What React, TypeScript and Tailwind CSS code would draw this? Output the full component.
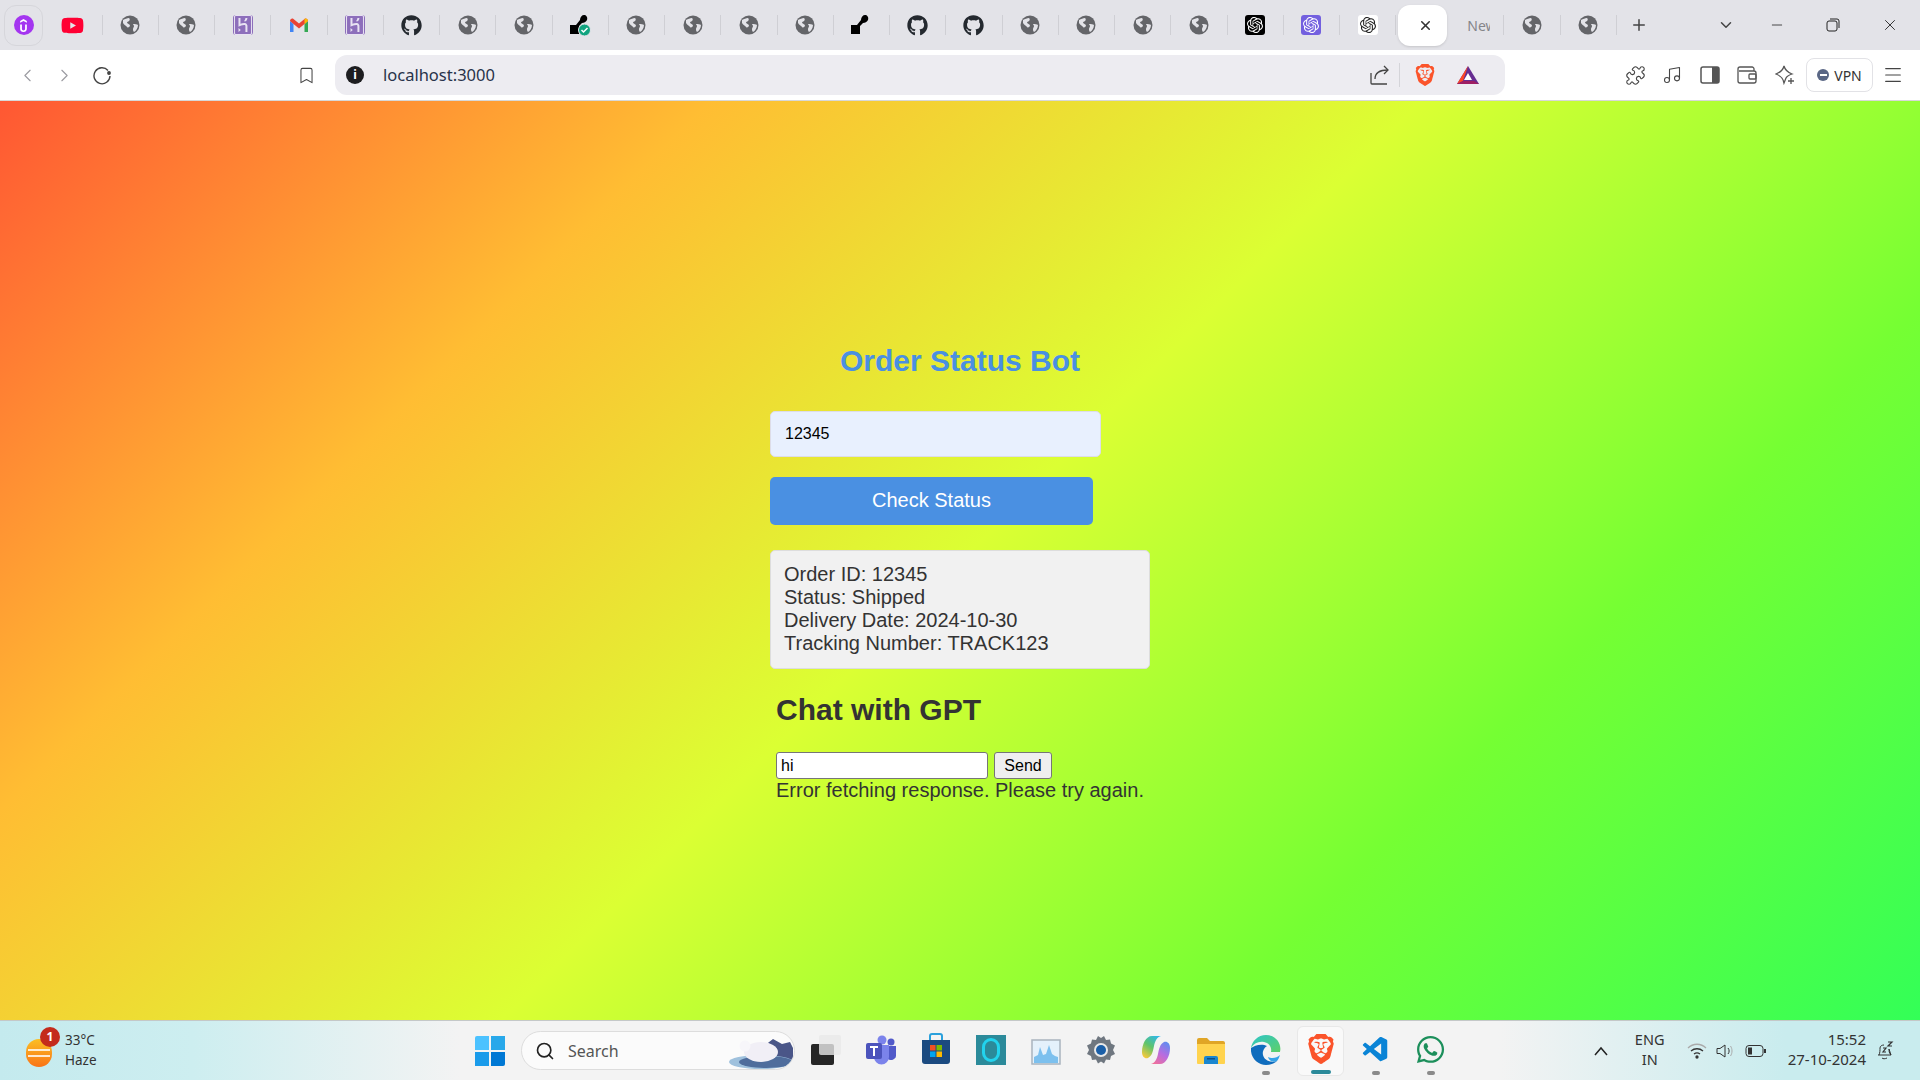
import { Bookmark, ChevronDown, ChevronLeft, ChevronRight, Menu, Minus, Music, Plus, Puzzle, Search, X } from "lucide-react";
import { FaGithub, FaWhatsapp, FaYoutube } from "react-icons/fa";
import { SiBrave, SiHeroku, SiOpenai, SiUdemy } from "react-icons/si";
import { VscVscode } from "react-icons/vsc";

function Globe() {
  return (
    <svg width="20" height="20" viewBox="0 0 20 20">
      <circle cx="10" cy="10" r="9.5" fill="#646569" />
      <path d="M3 5c2-1 4-2 6-2 1 1 1 2 0 3-1 .5-2 1-2 2 1 1 3 1 3 3-1 1.500-2 2-3 1-1-1.500-3-2-4-4zM13 9c2 0 4 0 5 1 0 3-2 6-4 7-1-1-1-2-1-3s1-2 1-3-1-1-1-2z" fill="#e3e3e8" />
    </svg>
  );
}

function Gmail() {
  return (
    <svg width="20" height="20" viewBox="0 0 20 20">
      <path d="M1 6v11h3.500V9z" fill="#4285f4" />
      <path d="M19 6v11h-3.500V9z" fill="#34a853" />
      <path d="M1 6c0-2 2-3 3.500-2L10 8.500 15.500 4c1.500-1 3.500 0 3.500 2l-3.500 3L10 13.500 4.500 9z" fill="#ea4335" />
      <path d="M15.500 4c1.500-1 3.500 0 3.500 2l-3.500 3z" fill="#fbbc04" />
    </svg>
  );
}

function KeyShape({ check }: { check?: boolean }) {
  return (
    <svg width="22" height="22" viewBox="0 0 22 22">
      <path d="M1 11h6l4-5c0-3 2-5 4-5s4 2 3 5c-1 2-3 3-5 3l-3 3v8H1z" fill="#000" />
      {check && <circle cx="15.500" cy="16" r="6" fill="#10a37f" stroke="#e3e3e8" />}
      {check && <path d="M12.500 16l2 2 4-4" fill="none" stroke="#fff" strokeWidth="1.500" />}
    </svg>
  );
}

function OpenAiTile({ bg, color }: { bg: string; color: string }) {
  return (
    <div className="w-5 h-5 rounded-[3px] flex items-center justify-center" style={{ background: bg }}>
      <SiOpenai size={16} color={color} />
    </div>
  );
}

const tabs = [
  "globe", "globe", "heroku", "gmail", "heroku", "github", "globe", "globe", "lock", "globe", "globe", "globe", "globe",
  "key", "github", "github", "globe", "globe", "globe", "globe", "aiBlack", "aiPurple", "aiWhite",
];

function TabIcon({ kind }: { kind: string }) {
  if (kind === "heroku") {
    return (
      <div className="w-5 h-5 rounded-[3px] bg-[#8d6fbb] flex items-center justify-center">
        <SiHeroku size={20} color="#e8e2f2" />
      </div>
    );
  }
  if (kind === "gmail") return <Gmail />;
  if (kind === "github") return <FaGithub size={21} color="#24292f" />;
  if (kind === "lock") return <KeyShape check />;
  if (kind === "key") return <KeyShape />;
  if (kind === "aiBlack") return <OpenAiTile bg="#000" color="#fff" />;
  if (kind === "aiPurple") return <OpenAiTile bg="#7360df" color="#fff" />;
  if (kind === "aiWhite") return <OpenAiTile bg="#fff" color="#222" />;
  return <Globe />;
}

function Tab({ children }: { children: React.ReactNode }) {
  return (
    <div className="w-[56.25px] h-5 flex items-center justify-center border-r border-[#cfcfd4] shrink-0">{children}</div>
  );
}

function TabStrip() {
  return (
    <div className="h-[50px] bg-[#e3e3e8] flex items-center shrink-0 pl-1">
      <div className="w-[39px] h-[41px] rounded-xl border border-[#d6d6db] flex items-center justify-center">
        <div className="w-5 h-5 rounded-full bg-[#a435f0] flex items-center justify-center">
          <SiUdemy size={13} color="#fff" />
        </div>
      </div>
      <div className="w-[59.5px] h-5 flex items-center justify-center border-r border-[#cfcfd4] shrink-0">
        <FaYoutube size={23} color="#ff0033" />
      </div>
      {tabs.map((t, i) => (
        <Tab key={i}>
          <TabIcon kind={t} />
        </Tab>
      ))}
      <div className="w-[49px] h-[41px] ml-[2px] bg-white rounded-xl flex items-center justify-end pr-[14px] shadow-sm shrink-0">
        <X size={15} strokeWidth={2.5} color="#333" />
      </div>
      <div className="w-[57px] pl-5 h-5 flex items-center text-[14px] text-[#85858a] font-['Noto_Sans',sans-serif] border-r border-[#cfcfd4] shrink-0">
        <span className="w-[23px] overflow-hidden">New</span>
      </div>
      <Tab>
        <Globe />
      </Tab>
      <Tab>
        <Globe />
      </Tab>
      <Plus size={18} color="#444" className="ml-[13px]" />
      <ChevronDown size={18} color="#444" className="ml-[69px]" />
      <Minus size={16} strokeWidth={1.200} color="#222" className="ml-[34px]" />
      <svg width="14" height="14" viewBox="0 0 14 14" className="ml-[41px]" fill="none" stroke="#222">
        <rect x="1" y="3" width="10" height="10" rx="2" />
        <path d="M4 1h7a2 2 0 0 1 2 2v7" />
      </svg>
      <X size={18} strokeWidth={1.200} color="#222" className="ml-[41px]" />
    </div>
  );
}

function Toolbar() {
  return (
    <div className="h-[51px] bg-white border-b border-[#d8d8d8] flex items-center shrink-0 pl-[17px] text-[#555]">
      <ChevronLeft size={21} strokeWidth={1.300} color="#9a9aa0" />
      <ChevronRight size={21} strokeWidth={1.300} color="#9a9aa0" className="ml-[16px]" />
      <svg width="20" height="20" viewBox="0 0 20 20" fill="none" stroke="#444" strokeWidth="1.400" className="ml-[17px]">
        <path d="M16 5.500A8 8 0 1 0 18 11" />
        <circle cx="17" cy="8" r="1.200" fill="#444" />
      </svg>
      <Bookmark size={19} strokeWidth={1.300} color="#444" className="ml-[185px]" />
      <div className="w-[1170px] h-10 ml-[19px] rounded-xl bg-[#edecf1] flex items-center pl-[11px] pr-[25px]">
        <div className="w-[18px] h-[18px] rounded-full bg-[#1d1d20] text-white text-[12px] font-bold flex items-center justify-center font-['Noto_Sans',sans-serif]">
          i
        </div>
        <span className="ml-[19px] text-[16.500px] text-[#28334a] font-['Noto_Sans',sans-serif] leading-none">localhost:3000</span>
        <svg width="22" height="22" viewBox="0 0 22 22" fill="none" stroke="#444" strokeWidth="1.300" className="ml-auto">
          <path d="M2 9v10a1 1 0 0 0 1 1h15" />
          <path d="M6 15c0-6 5-9 13-9" />
          <path d="M15 2l4 4-4 4" />
        </svg>
        <div className="w-px h-6 bg-[#d4d4d9] ml-[8px]" />
        <SiBrave size={22} color="#fb542b" className="ml-[14px]" />
        <svg width="24" height="20" viewBox="0 0 24 20" className="ml-[20px]">
          <path d="M12 1 1 19h22z" fill="#662d91" />
          <path d="M12 1 1 19l6-3z" fill="#ff4724" />
          <path d="M1 19h22l-5-3H7z" fill="#9e1f63" />
          <path d="M12 8l-4 7h8z" fill="#fff" />
        </svg>
      </div>
      <Puzzle size={21} strokeWidth={1.300} color="#444" className="ml-[120px]" />
      <Music size={20} strokeWidth={1.300} color="#444" className="ml-[16px]" />
      <svg width="20" height="18" viewBox="0 0 20 18" className="ml-[18px]">
        <rect x="1" y="1" width="18" height="16" rx="2" fill="none" stroke="#555" strokeWidth="1.500" />
        <rect x="12" y="1" width="7" height="16" fill="#555" />
      </svg>
      <svg width="20" height="18" viewBox="0 0 20 18" fill="none" stroke="#555" strokeWidth="1.300" className="ml-[17px]">
        <path d="M17 5V3a2 2 0 0 0-2-2H3a2 2 0 0 0-2 2v12a2 2 0 0 0 2 2h14a2 2 0 0 0 2-2V7a2 2 0 0 0-2-2H2" />
        <rect x="12" y="8" width="7" height="5" rx="1" />
      </svg>
      <svg width="20" height="20" viewBox="0 0 20 20" fill="none" stroke="#555" strokeWidth="1.300" className="ml-[18px]">
        <path d="M9 1c1 4 3 6 8 8-3 1-5 2-6 4l-2 5c-1-5-3-7-8-9 5-2 7-4 8-8z" />
        <path d="M16 13v6M13 16h6" />
      </svg>
      <div className="w-[67px] h-[34px] ml-[11px] rounded-lg border border-[#e2e2e6] flex items-center justify-center gap-[5px] text-[14px] text-[#333] font-['Noto_Sans',sans-serif]">
        <span className="w-[12px] h-[12px] rounded-full bg-[#5a6785] flex items-center justify-center">
          <span className="w-[7px] h-[2px] bg-white" />
        </span>
        VPN
      </div>
      <Menu size={22} strokeWidth={1.200} color="#444" className="ml-[9px]" />
    </div>
  );
}

function OrderPage() {
  return (
    <main className="flex-1 min-h-0 overflow-hidden bg-[linear-gradient(135deg,#ff5733,#ffbd33,#dbff33,#75ff33,#33ff57)] font-['Liberation_Sans',Arial,sans-serif] text-[#333]">
      <div className="w-[380px] mx-auto pt-[240px]">
        <h1 className="text-[30px] leading-[40px] font-bold text-[#4a90e2] text-center">Order Status Bot</h1>
        <input
          readOnly
          value="12345"
          className="block w-[331px] h-[46px] mt-[30px] px-[14px] rounded-[5px] border border-[#dddde8] bg-[#e8f0fe] text-[16px] text-black outline-none"
        />
        <button className="block w-[323px] h-[48px] mt-[20px] pb-[2px] rounded-[5px] bg-[#4a90e2] text-white text-[20px]">
          Check Status
        </button>
        <div className="mt-[25px] h-[119px] rounded-[5px] border border-[#dddddd] bg-[#f1f1f1] px-[13px] pt-[12px] text-[20px] leading-[23px]">
          <p>Order ID: 12345</p>
          <p>Status: Shipped</p>
          <p>Delivery Date: 2024-10-30</p>
          <p>Tracking Number: TRACK123</p>
        </div>
        <div className="pl-[6px]">
          <h2 className="mt-[23px] text-[30px] leading-[36px] font-bold">Chat with GPT</h2>
          <div className="mt-[24px] flex gap-[6px]">
            <input
              readOnly
              value="hi"
              className="w-[212px] h-[27px] px-[4px] rounded-[3px] border border-[#767676] bg-white text-[16px] text-black outline-none"
            />
            <button className="w-[58px] h-[27px] rounded-[3px] border border-[#767676] bg-[#efefef] text-[16px] text-black">
              Send
            </button>
          </div>
          <p className="text-[20px] leading-[23px] whitespace-nowrap">Error fetching response. Please try again.</p>
        </div>
      </div>
    </main>
  );
}

function TaskIcon({ children, active, dot }: { children: React.ReactNode; active?: boolean; dot?: boolean }) {
  return (
    <div className={active ? "w-[47px] h-[50px] mx-1 rounded-md bg-[#f9f9f9] border border-[#e8e8e8] flex flex-col items-center justify-end shrink-0" : "w-[55px] h-[50px] flex flex-col items-center justify-end shrink-0"}>
      {children}
      <span className={active ? "w-[20px] h-[4px] mt-[6px] mb-[1px] rounded-full bg-[#2b8a9a]" : dot ? "w-2 h-[4px] mt-[6px] mb-[1px] rounded-full bg-[#8a8a8a]" : "h-[4px] mt-[6px] mb-[1px]"} />
    </div>
  );
}

function Taskbar() {
  return (
    <div className="h-[60px] shrink-0 border-t border-[#c4c8c8] bg-[linear-gradient(90deg,#c4eaee,#cdeef0_10%,#f3f3f3_24%,#f3f3f3_78%,#c9ecee_93%)] flex items-center font-['Noto_Sans',sans-serif] text-[#222]">
      {/* weather */}
      <div className="w-[475px] pl-[26px] flex items-center shrink-0">
        <div className="relative w-[28px] h-[28px] mt-[4px]">
          <div className="w-[26px] h-[28px] rounded-full bg-[linear-gradient(180deg,#fbbf24,#f97316)]" />
          <div className="absolute left-[2px] top-[10px] w-[22px] h-[2px] bg-white/80" />
          <div className="absolute left-[2px] top-[16px] w-[22px] h-[2px] bg-white/80" />
          <div className="absolute left-[14px] -top-[12px] w-[20px] h-[20px] rounded-full bg-[#c42b1c] text-white text-[12px] font-bold flex items-center justify-center">1</div>
        </div>
        <div className="ml-[11px] -mt-px text-[13.500px] leading-[20px] text-[#333]">
          <div>33°C</div>
          <div>Haze</div>
        </div>
      </div>
      {/* start + search */}
      <div className="w-[30px] h-[30px] grid grid-cols-2 gap-[2px] shrink-0">
        <div className="bg-[#4cc2ff] rounded-tl-[2px]" />
        <div className="bg-[#28a8ea]" />
        <div className="bg-[#1a9bea]" />
        <div className="bg-[#0078d4] rounded-br-[2px]" />
      </div>
      <div className="w-[274px] h-[39px] ml-[16px] rounded-full bg-[#fbfbfb] border border-[#dddddd] flex items-center pl-[13px] overflow-hidden shrink-0">
        <Search size={20} color="#222" strokeWidth={2} />
        <span className="ml-[13px] text-[16px] text-[#555]">Search</span>
        <svg width="66" height="38" viewBox="0 0 66 38" className="ml-auto">
          <path d="M28 20 45 7l9 5 8-2 3 6v12H28z" fill="#4a5688" />
          <ellipse cx="33" cy="30" rx="32" ry="7" fill="#9fc1dd" />
          <ellipse cx="38" cy="30" rx="27" ry="6" fill="#4f6d9c" />
          <ellipse cx="33" cy="20" rx="17" ry="10" fill="#f1eff6" />
          <circle cx="17" cy="14" r="5.500" fill="#f7f6fa" />
        </svg>
      </div>
      {/* pinned apps */}
      <div className="flex items-center ml-[3px]">
        <TaskIcon>
          <div className="relative w-[30px] h-[30px]">
            <div className="absolute left-0 bottom-0 w-[23px] h-[21px] rounded-[2px] bg-[#262626]" />
            <div className="absolute right-0 top-0 w-[22px] h-[20px] rounded-[2px] bg-[#e9e9e9]/80" />
          </div>
        </TaskIcon>
        <TaskIcon>
          <svg width="32" height="30" viewBox="0 0 32 30">
            <circle cx="26" cy="7" r="3.500" fill="#5059c9" />
            <path d="M21 11h10v10a5 5 0 0 1-8 3z" fill="#5059c9" />
            <circle cx="17" cy="5" r="4.500" fill="#7b83eb" />
            <path d="M9 10h15v12a7.500 7.500 0 0 1-15 0z" fill="#7b83eb" />
            <rect x="1" y="8" width="16" height="16" rx="2" fill="#4b53bc" />
            <path d="M5 12h8M9 12v9" stroke="#fff" strokeWidth="2" />
          </svg>
        </TaskIcon>
        <TaskIcon>
          <svg width="30" height="32" viewBox="0 0 30 32">
            <path d="M9 7V3a2 2 0 0 1 2-2h8a2 2 0 0 1 2 2v4" fill="none" stroke="#2aa0dc" strokeWidth="2" />
            <path d="M1 7h28v21a3 3 0 0 1-3 3H4a3 3 0 0 1-3-3z" fill="#1b4a80" />
            <rect x="9" y="12" width="5.500" height="5.500" fill="#f25022" />
            <rect x="15.500" y="12" width="5.500" height="5.500" fill="#7fba00" />
            <rect x="9" y="18.500" width="5.500" height="5.500" fill="#00a4ef" />
            <rect x="15.500" y="18.500" width="5.500" height="5.500" fill="#ffb900" />
          </svg>
        </TaskIcon>
        <TaskIcon>
          <div className="w-[30px] h-[30px] bg-[#2b8a9a] flex items-center justify-center">
            <div className="w-[18px] h-[24px] rounded-full border-[3px] border-[#22d3ee]" />
          </div>
        </TaskIcon>
        <TaskIcon>
          <svg width="30" height="26" viewBox="0 0 30 26">
            <rect x="1" y="1" width="28" height="24" fill="#e4f1fb" stroke="#a9b4bf" strokeWidth="1.500" />
            <path d="M3 24V18l4-2 2-8 3 8 3-1 3-9 3 9 3 2 3 1v6z" fill="#7cc0ee" />
          </svg>
        </TaskIcon>
        <TaskIcon>
          <svg width="30" height="30" viewBox="0 0 30 30">
            <path d="M15 3 18 1l2 4 4-.500 1 4 4 2-2 4.500 2 4-4 2-1 4-4-.500-2 4-3-2-3 2-2-4-4 .500-1-4-4-2 2-4-2-4.500 4-2 1-4 4 .500 2-4z" fill="#6f7780" />
            <circle cx="15" cy="15" r="7" fill="#e9e9e9" />
            <circle cx="15" cy="15" r="5" fill="#1a5fa8" />
          </svg>
        </TaskIcon>
        <TaskIcon>
          <svg width="30" height="30" viewBox="0 0 30 30">
            <defs>
              <linearGradient id="cpA" x1="0.800" y1="0" x2="0.200" y2="1">
                <stop offset="0" stopColor="#2fb8e8" />
                <stop offset="0.500" stopColor="#5fc46a" />
                <stop offset="1" stopColor="#f7c93b" />
              </linearGradient>
              <linearGradient id="cpB" x1="0.800" y1="0" x2="0.200" y2="1">
                <stop offset="0" stopColor="#5f8cf0" />
                <stop offset="0.500" stopColor="#b86ce0" />
                <stop offset="1" stopColor="#f0709a" />
              </linearGradient>
            </defs>
            <path d="M11 1h9c-4 1-6 5-7 10-1 5-2 10-6 12-3 1-6-1-6-6 0-8 4-16 10-16z" fill="url(#cpA)" />
            <path d="M19 29h-9c4-1 6-5 7-10 1-5 2-10 6-12 3-1 6 1 6 6 0 8-4 16-10 16z" fill="url(#cpB)" />
          </svg>
        </TaskIcon>
        <TaskIcon>
          <svg width="30" height="28" viewBox="0 0 30 28">
            <path d="M1 3a2 2 0 0 1 2-2h8l3 3h13a2 2 0 0 1 2 2v4H1z" fill="#e0a526" />
            <path d="M1 7h28v19a1 1 0 0 1-1 1H2a1 1 0 0 1-1-1z" fill="#ffd34e" />
            <path d="M8 27v-6a2 2 0 0 1 2-2h10a2 2 0 0 1 2 2v6z" fill="#1a86cf" />
            <rect x="11" y="21" width="8" height="1.500" fill="#0d4f87" />
          </svg>
        </TaskIcon>
        <TaskIcon dot>
          <svg width="30" height="30" viewBox="0 0 30 30">
            <defs>
              <linearGradient id="edgeA" x1="0" y1="0" x2="1" y2="1">
                <stop offset="0" stopColor="#2cc5c9" />
                <stop offset="1" stopColor="#5fd068" />
              </linearGradient>
            </defs>
            <path d="M15 0C7 0 1 6 0 13c3-5 8-7 13-6 5 1 8 5 7 10h9c2-8-4-17-14-17z" fill="url(#edgeA)" />
            <path d="M0 13c-1 10 7 17 15 17 4 0 8-1 11-4-7 2-13-1-14-6-1-4 2-8 4-9-6-3-13 0-16 2z" fill="#0f6cbd" />
            <path d="M29 20c-3 3-8 4-12 2 1 4 5 6 9 4 1-1 2-3 3-6z" fill="#35a3e8" />
          </svg>
        </TaskIcon>
        <TaskIcon active dot>
          <SiBrave size={30} color="#fb542b" />
        </TaskIcon>
        <TaskIcon dot>
          <VscVscode size={30} color="#0a84d6" />
        </TaskIcon>
        <TaskIcon dot>
          <FaWhatsapp size={31} color="#1c8f5b" />
        </TaskIcon>
      </div>
      {/* tray */}
      <div className="ml-auto flex items-center pr-[26px]">
        <svg width="16" height="10" viewBox="0 0 16 10" fill="none" stroke="#222" strokeWidth="1.500">
          <path d="M2 9l6-7 6 7" />
        </svg>
        <div className="w-[50px] ml-[16px] -mt-[3px] text-center text-[14.500px] leading-[20px] text-[#333]">
          <div>ENG</div>
          <div>IN</div>
        </div>
        <svg width="20" height="16" viewBox="0 0 20 16" fill="none" stroke="#333" strokeWidth="1.300" className="ml-[12px]">
          <path d="M1 5c5-5 13-5 18 0" stroke="#aaa" />
          <path d="M4 8c3.500-3 8.500-3 12 0M7 11c2-1.500 4-1.500 6 0" />
          <circle cx="10" cy="14" r="1" fill="#333" />
        </svg>
        <svg width="18" height="16" viewBox="0 0 18 16" fill="none" stroke="#333" className="ml-[9px]">
          <path d="M1 5.500h3L9 2v12L4 10.500H1zM12 5c1.500 2 1.500 4 0 6" />
          <path d="M14.500 3c2 3 2 7 0 10" stroke="#aaa" />
        </svg>
        <svg width="22" height="14" viewBox="0 0 22 14" fill="none" stroke="#333" className="ml-[11px]">
          <rect x="1" y="1.500" width="17" height="11" rx="3" />
          <rect x="3" y="3.500" width="4" height="7" fill="#333" stroke="none" />
          <rect x="19" y="5" width="2" height="4" fill="#333" stroke="none" />
        </svg>
        <div className="ml-[21px] -mt-[3px] text-right text-[15px] leading-[20px] text-[#333]">
          <div>15:52</div>
          <div>27-10-2024</div>
        </div>
        <svg width="18" height="20" viewBox="0 0 18 20" fill="none" stroke="#333" className="ml-[10px]">
          <path d="M3 14c1-2 1-5 1-7 0-2 2-3 4-3M13 8c0 2 0 4 2 6zM2 14h13M6 17c1 1 3 1 5 0" />
          <path d="M7 7h3l-3 4h3M12 1h4l-4 4h4" strokeWidth="1.200" />
        </svg>
      </div>
    </div>
  );
}

export default function App() {
  return (
    <div className="h-screen w-full flex flex-col overflow-hidden">
      <TabStrip />
      <Toolbar />
      <OrderPage />
      <Taskbar />
    </div>
  );
}
